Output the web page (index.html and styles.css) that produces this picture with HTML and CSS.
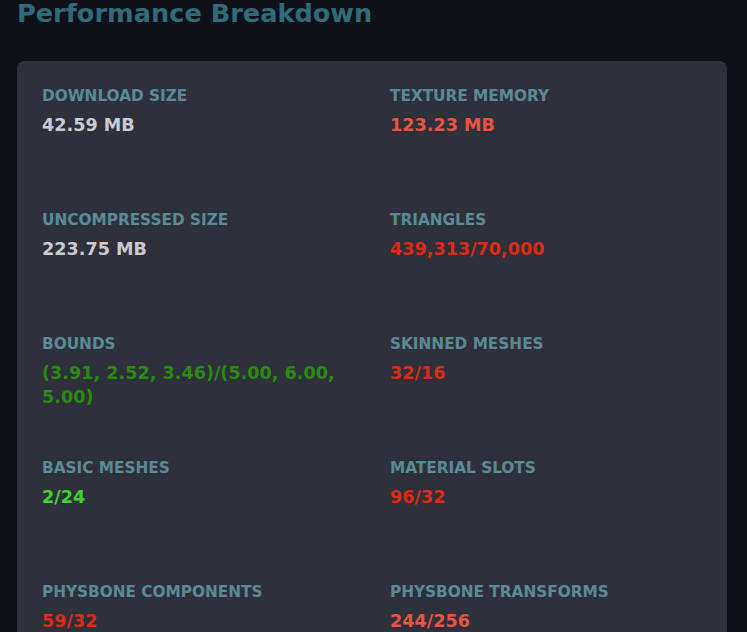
FILE: index.html
```html
<!DOCTYPE html>
<html lang="en">
<head>
<meta charset="utf-8">
<title>Performance Breakdown</title>
<link rel="stylesheet" href="styles.css">
</head>
<body>
<main class="page">
  <h2 class="title">Performance Breakdown</h2>
  <section class="card">
    <div class="stat">
      <div class="label">Download Size</div>
      <div class="value neutral">42.59 MB</div>
    </div>
    <div class="stat">
      <div class="label">Texture Memory</div>
      <div class="value warn">123.23 MB</div>
    </div>
    <div class="stat">
      <div class="label">Uncompressed Size</div>
      <div class="value neutral">223.75 MB</div>
    </div>
    <div class="stat">
      <div class="label">Triangles</div>
      <div class="value bad">439,313/70,000</div>
    </div>
    <div class="stat">
      <div class="label">Bounds</div>
      <div class="value ok">(3.91, 2.52, 3.46)/(5.00, 6.00, 5.00)</div>
    </div>
    <div class="stat">
      <div class="label">Skinned Meshes</div>
      <div class="value bad">32/16</div>
    </div>
    <div class="stat">
      <div class="label">Basic Meshes</div>
      <div class="value good">2/24</div>
    </div>
    <div class="stat">
      <div class="label">Material Slots</div>
      <div class="value bad">96/32</div>
    </div>
    <div class="stat">
      <div class="label">PhysBone Components</div>
      <div class="value bad">59/32</div>
    </div>
    <div class="stat">
      <div class="label">PhysBone Transforms</div>
      <div class="value warn">244/256</div>
    </div>
  </section>
</main>
</body>
</html>
```

FILE: styles.css
```css
html, body {
  margin: 0;
  padding: 0;
  background: #0f1119;
  height: 100%;
  overflow: hidden;
}

body {
  font-family: "DejaVu Sans", "Noto Sans", sans-serif;
}

.page {
  padding: 0 20px 0 17px;
}

.title {
  margin: -2px 0 0 0;
  font-size: 25.6px;
  line-height: 31px;
  font-weight: 700;
  color: #2f6b78;
}

.card {
  margin-top: 32px;
  background: #2e313c;
  border-radius: 8px;
  padding: 25px 25px 24px 25px;
  display: grid;
  grid-template-columns: 1fr 1fr;
  column-gap: 36px;
  grid-auto-rows: 124px;
}

.label {
  font-size: 15.3px;
  line-height: 20px;
  font-weight: 700;
  text-transform: uppercase;
  color: #5a8a93;
}

.value {
  margin-top: 7px;
  font-size: 17.6px;
  line-height: 24px;
  font-weight: 700;
}

.neutral { color: #cbcbcf; }
.warn { color: #e8553f; }
.bad { color: #dc2b12; }
.ok { color: #2a8a10; }
.good { color: #40d42a; }
```
